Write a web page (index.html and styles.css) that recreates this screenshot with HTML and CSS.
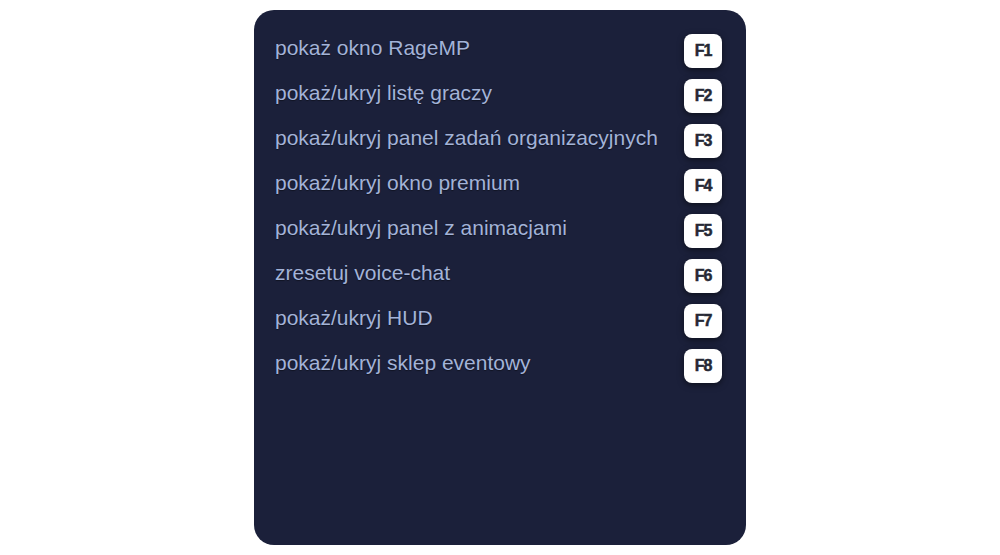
FILE: index.html
```html
<!DOCTYPE html>
<html lang="pl">
<head>
    <meta charset="UTF-8">
    <title>Klawiszologia</title>
    <link rel="stylesheet" href="styles.css">
</head>
<body>
<div class="panel">
    <ul class="keys">
        <li><span class="label">pokaż okno RageMP</span><span class="key">F1</span></li>
        <li><span class="label">pokaż/ukryj listę graczy</span><span class="key">F2</span></li>
        <li><span class="label">pokaż/ukryj panel zadań organizacyjnych</span><span class="key">F3</span></li>
        <li><span class="label">pokaż/ukryj okno premium</span><span class="key">F4</span></li>
        <li><span class="label">pokaż/ukryj panel z animacjami</span><span class="key">F5</span></li>
        <li><span class="label">zresetuj voice-chat</span><span class="key">F6</span></li>
        <li><span class="label">pokaż/ukryj HUD</span><span class="key">F7</span></li>
        <li><span class="label">pokaż/ukryj sklep eventowy</span><span class="key">F8</span></li>
    </ul>
</div>
</body>
</html>
```

FILE: styles.css
```css
body{
    margin: 0;
    background: #fff;
    font-family: "Liberation Sans", Arial, sans-serif;
}
.panel{
    width: 492px;
    height: 535px;
    margin: 10px auto 0;
    box-sizing: border-box;
    padding: 24px 24px 0 21px;
    background: #1b203a;
    border-radius: 20px;
}
.keys{
    margin: 0;
    padding: 0;
    list-style: none;
    display: flex;
    flex-direction: column;
    gap: 11px;
}
.keys li{
    height: 34px;
    display: flex;
    align-items: center;
    justify-content: space-between;
}
.label{
    color: #a3b3d8;
    font-size: 21px;
    margin-top: -6px;
    text-shadow: 0 1px 1px rgba(0,0,0,.4);
}
.key{
    width: 38px;
    height: 34px;
    display: flex;
    align-items: center;
    justify-content: center;
    background: #fff;
    border-radius: 8px;
    box-shadow: 0 2px 6px rgba(0,0,0,.5);
    color: #262834;
    font-weight: bold;
    font-size: 16px;
    letter-spacing: -1px;
    -webkit-text-stroke: 0.5px #262834;
}
```
